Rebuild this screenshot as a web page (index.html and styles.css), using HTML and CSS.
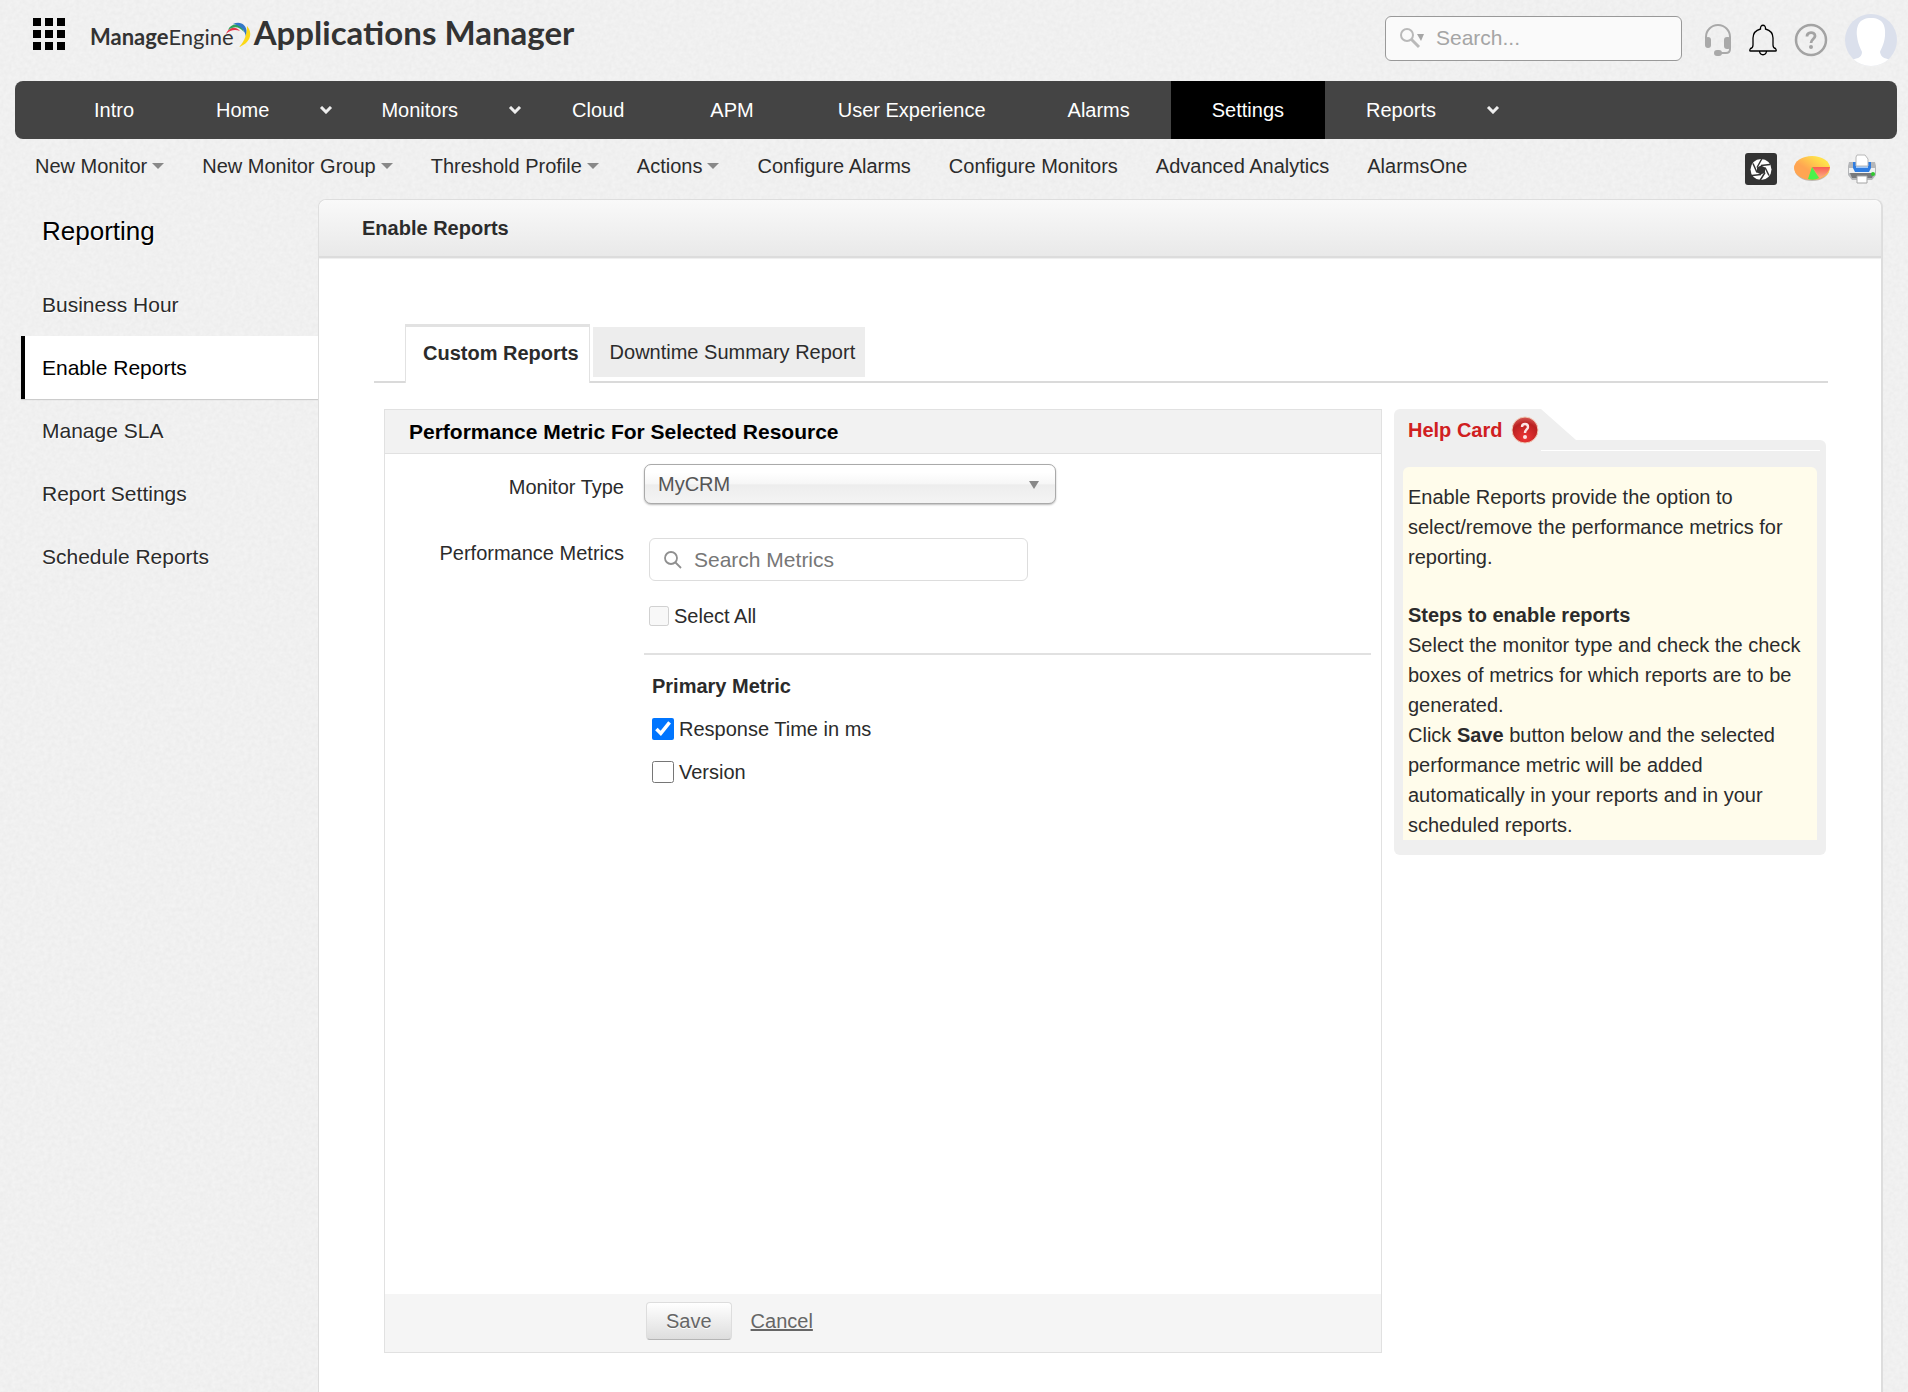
FILE: index.html
```html
<!DOCTYPE html>
<html lang="en">
<head>
    <meta charset="UTF-8">
    <meta name="viewport" content="width=device-width, initial-scale=1.0">
    <title>Applications Manager - Enable Reports</title>
    <link rel="stylesheet" href="styles.css">
</head>
<body>
    <header class="topbar">
        <button class="icon-btn" aria-label="All applications">
            <svg width="32" height="32" viewBox="0 0 32 32"><path d="M0 0h8v8H0zM12 0h8v8h-8zM24 0h8v8h-8zM0 12h8v8H0zM12 12h8v8h-8zM24 12h8v8h-8zM0 24h8v8H0zM12 24h8v8h-8zM24 24h8v8h-8z"/></svg>
        </button>
        <a class="logo" href="#">
            <span class="logo-brand"><b>Manage</b>Engine
                <svg class="logo-swoosh" width="26" height="26" viewBox="0 0 26 26">
                    <path d="M1 12C3 6 10 3 15 9C10 7 5 8 1 12Z" fill="#e8354b"/>
                    <path d="M3 8C6 1 16 0 19 10C14 4 9 4 3 8Z" fill="#2fa35a"/>
                    <path d="M8 2C17-2 24 5 21 15C20 8 15 3 8 2Z" fill="#3277c8"/>
                    <path d="M22 4C29 12 24 22 14 25C20 19 22 12 22 4Z" fill="#fbd817"/>
                </svg>
            </span>
            <span class="logo-product">Applications Manager</span>
        </a>
        <div class="topbar-tools">
            <div class="search">
                <svg width="26" height="22" viewBox="0 0 26 22" fill="none" stroke="#b9b9b9">
                    <circle cx="8" cy="8" r="6" stroke-width="2"/>
                    <path d="M12 12l8 8" stroke-width="3"/>
                    <path d="M18 7h7l-3 7z" fill="#a6a6a6" stroke="none"/>
                </svg>
                <input type="text" placeholder="Search..." aria-label="Search">
            </div>
            <button class="icon-btn" aria-label="Support">
                <svg width="28" height="32" viewBox="0 0 28 32" fill="none" stroke="#a9a9a9">
                    <path d="M2 16V13a12 12 0 0 1 24 0v12q0 4-4 4h-8" stroke-width="2"/>
                    <rect x="1" y="13" width="6" height="11" rx="3" fill="#a9a9a9" stroke="none"/>
                    <rect x="20" y="13" width="7" height="12" rx="3" fill="#a9a9a9" stroke="none"/>
                    <rect x="10" y="26" width="8" height="6" rx="3" fill="#a9a9a9" stroke="none"/>
                </svg>
            </button>
            <button class="icon-btn" aria-label="Notifications">
                <svg width="28" height="32" viewBox="0 0 28 32" fill="none" stroke="#000" stroke-width="1.3">
                    <path d="M11.500 5C11 0 17 0 16.500 5C22 6.500 24 10 24 14V21Q24 24 26.500 24.500Q28 27 26.500 27H1.500Q0 27 1.500 24.500Q4 24 4 21V14C4 10 6 6.500 11.500 5Z"/>
                    <path d="M10.500 27C11 32 17 32 17.500 27"/>
                </svg>
            </button>
            <button class="icon-btn" aria-label="Help">
                <svg width="34" height="34" viewBox="0 0 34 34" fill="none" stroke="#a3a3a3">
                    <circle cx="17" cy="17" r="15" stroke-width="2.500"/>
                    <path d="M13 13.500C13 8.500 21 8.500 21 13C21 16 17 16 17 20" stroke-width="2.800"/>
                    <circle cx="17" cy="24" r="2" fill="#a3a3a3" stroke="none"/>
                </svg>
            </button>
            <button class="icon-btn" aria-label="Profile">
                <svg width="52" height="52" viewBox="0 0 52 52">
                    <defs><clipPath id="avatar-clip"><circle cx="26" cy="26" r="26"/></clipPath></defs>
                    <g clip-path="url(#avatar-clip)">
                        <path fill="#dbe0ec" d="M0 0h52v52H0z"/>
                        <path fill="#fff" d="M26 4C38 4 41 12 40 22C39 31 36 35 35 38C36 44 41 45 48 46V52H4V46C11 45 17 44 17 38C16 35 13 31 12 22C11 12 14 4 26 4Z"/>
                    </g>
                </svg>
            </button>
        </div>
    </header>

    <nav class="mainnav">
        <a href="#">Intro</a>
        <a class="has-menu" href="#">Home <svg class="chevron" width="14" height="8" viewBox="0 0 14 8"><path d="M2 1l5 5 5-5"/></svg></a>
        <a class="has-menu" href="#">Monitors <svg class="chevron" width="14" height="8" viewBox="0 0 14 8"><path d="M2 1l5 5 5-5"/></svg></a>
        <a class="short" href="#">Cloud</a>
        <a class="short" href="#">APM</a>
        <a href="#">User Experience</a>
        <a href="#">Alarms</a>
        <a class="active" href="#">Settings</a>
        <a class="has-menu" href="#">Reports <svg class="chevron" width="14" height="8" viewBox="0 0 14 8"><path d="M2 1l5 5 5-5"/></svg></a>
    </nav>

    <div class="subnav">
        <a class="drop" href="#">New Monitor</a>
        <a class="drop" href="#">New Monitor Group</a>
        <a class="drop" href="#">Threshold Profile</a>
        <a class="drop" href="#">Actions</a>
        <a href="#">Configure Alarms</a>
        <a href="#">Configure Monitors</a>
        <a href="#">Advanced Analytics</a>
        <a href="#">AlarmsOne</a>
        <div class="subnav-icons">
            <button class="icon-btn" aria-label="Snapshot">
                <svg width="32" height="32" viewBox="0 0 32 32">
                    <rect width="32" height="32" rx="3" fill="#333"/>
                    <circle cx="16" cy="16.500" r="10.500" fill="#fff"/>
                    <path d="M16 12.500l4 2v5l-4 2-4-2v-5z" fill="#333"/>
                    <path d="M16 12.500l9-1M20 14.500l4 8M20 19.500l-5 8M16 21.500l-9 1M12 19.500l-4-9M12 14.500l5-9" stroke="#333" stroke-width="1.500"/>
                </svg>
            </button>
            <button class="icon-btn" aria-label="Charts">
                <svg width="36" height="26" viewBox="0 0 36 26">
                    <defs>
                        <linearGradient id="pie" x1="0" y1="1" x2="1" y2="0"><stop offset="0.400" stop-color="#ffa552"/><stop offset="0.800" stop-color="#ffe14a"/></linearGradient>
                        <linearGradient id="pie-red" x1="0" y1="0" x2="0" y2="1"><stop offset="0" stop-color="#f95c50"/><stop offset="1" stop-color="#fab184"/></linearGradient>
                    </defs>
                    <ellipse cx="18" cy="14" rx="17" ry="11" fill="#bdb9b2"/>
                    <ellipse cx="18" cy="12" rx="18" ry="12" fill="url(#pie)"/>
                    <path d="M18 11H36Q35 18 26 22Z" fill="url(#pie-red)"/>
                    <path d="M18 11L14 23Q20 25 25 22Z" fill="#4bf24b"/>
                </svg>
            </button>
            <button class="icon-btn" aria-label="Print">
                <svg width="30" height="30" viewBox="0 0 30 30">
                    <path d="M2 8h5v5h16V8h5l1 4v9l-4 5H5l-4-5v-9z" fill="#b4b6b9"/>
                    <path d="M2 14h26v5H2z" fill="#f0f1f2"/>
                    <path d="M3 19h24l-2 5H5z" fill="#77797c"/>
                    <path d="M6 8h18v6l-2 4H8l-2-4z" fill="#2f7de1"/>
                    <path d="M9 9h12v5H9z" fill="#9fc8fa"/>
                    <path d="M10 1h8l3 4v7H9V3z" fill="#fff" stroke="#b8b8b8"/>
                    <path d="M10 22h10v7H10z" fill="#fff" stroke="#a5a5a5"/>
                    <circle cx="26" cy="20" r="2" fill="#2fc92f"/>
                </svg>
            </button>
        </div>
    </div>

    <div class="page">
        <aside class="sidebar">
            <h2>Reporting</h2>
            <a href="#">Business Hour</a>
            <a class="active" href="#">Enable Reports</a>
            <a href="#">Manage SLA</a>
            <a href="#">Report Settings</a>
            <a href="#">Schedule Reports</a>
        </aside>

        <main class="content">
            <h1 class="content-title">Enable Reports</h1>
            <div class="content-body">
                <div class="tabs">
                    <button class="tab active">Custom Reports</button>
                    <button class="tab">Downtime Summary Report</button>
                </div>

                <div class="columns">
                    <form class="panel">
                        <h2 class="panel-title">Performance Metric For Selected Resource</h2>
                        <div class="panel-body">
                            <label class="field-label" for="monitorType">Monitor Type</label>
                            <div class="select-wrap">
                                <select id="monitorType">
                                    <option>MyCRM</option>
                                </select>
                                <svg class="select-arrow" width="10" height="8" viewBox="0 0 10 8"><path d="M0 0h10L5 8z" fill="#888"/></svg>
                            </div>

                            <label class="field-label metrics-label" for="metricSearch">Performance Metrics</label>
                            <div class="metrics">
                                <div class="metric-search">
                                    <svg width="18" height="18" viewBox="0 0 18 18" fill="none" stroke="#8f8f8f" stroke-width="1.800"><circle cx="7" cy="7" r="6"/><path d="M11.500 11.500l5.500 5.500"/></svg>
                                    <input type="text" id="metricSearch" placeholder="Search Metrics">
                                </div>
                                <label class="select-all"><input type="checkbox" disabled>Select All</label>
                                <div class="metric-group">
                                    <h3>Primary Metric</h3>
                                    <label><input type="checkbox" checked>Response Time in ms</label>
                                    <label><input type="checkbox">Version</label>
                                </div>
                            </div>
                        </div>
                        <div class="panel-footer">
                            <button type="button" class="save-btn">Save</button>
                            <a href="#">Cancel</a>
                        </div>
                    </form>

                    <aside class="help-card">
                        <div class="help-tab">
                            <h2>Help Card</h2>
                            <svg width="28" height="28" viewBox="0 0 28 28">
                                <defs><radialGradient id="help-red" cx="0.500" cy="0.800" r="0.800"><stop offset="0" stop-color="#ee3535"/><stop offset="0.700" stop-color="#ba2020"/><stop offset="1" stop-color="#d65a55"/></radialGradient></defs>
                                <circle cx="14" cy="14" r="13" fill="url(#help-red)" stroke="#f0c9b4"/>
                                <path d="M11 11C11 7 17 7 17 11C17 13.500 14 13.500 14 17" fill="none" stroke="#fbe3e3" stroke-width="2.400"/>
                                <circle cx="14" cy="21" r="2" fill="#fbe3e3"/>
                            </svg>
                        </div>
                        <div class="help-frame">
                            <div class="help-text">
                                <p>Enable Reports provide the option to select/remove the performance metrics for reporting.</p>
                                <h3>Steps to enable reports</h3>
                                <p>Select the monitor type and check the check boxes of metrics for which reports are to be generated.</p>
                                <p>Click <b>Save</b> button below and the selected performance metric will be added automatically in your reports and in your scheduled reports.</p>
                            </div>
                        </div>
                    </aside>
                </div>
            </div>
        </main>
    </div>
</body>
</html>
```

FILE: styles.css
```css
* {
    box-sizing: border-box;
}
body {
    display: flex;
    flex-direction: column;
    min-height: 100vh;
    margin: 0;
    font-family: "Liberation Sans", Arial, sans-serif;
    font-size: 20px;
    line-height: 24px;
    color: #2b2b2b;
    background-color: #f5f5f5;
    /* paper texture */
    background-image: url("data:image/svg+xml,%3Csvg xmlns='http://www.w3.org/2000/svg' width='200' height='200'%3E%3Cfilter id='n'%3E%3CfeTurbulence type='fractalNoise' baseFrequency='0.25' numOctaves='2' stitchTiles='stitch'/%3E%3CfeColorMatrix values='0 0 0 0 0 0 0 0 0 0 0 0 0 0 0 0.04 0 0 0 0'/%3E%3C/filter%3E%3Crect width='200' height='200' filter='url(%23n)'/%3E%3C/svg%3E");
}
h1, h2, h3, p {
    margin: 0;
}
a {
    color: inherit;
    text-decoration: none;
}
svg {
    display: block;
    flex-shrink: 0;
}
button, input, select {
    font-family: inherit;
    font-size: inherit;
    color: inherit;
}
.icon-btn {
    padding: 0;
    border: none;
    background: none;
    cursor: pointer;
}

/* Top bar */
.topbar {
    display: flex;
    align-items: center;
    height: 81px;
    padding: 0 11px 0 33px;
}
.topbar > .icon-btn {
    margin-bottom: 13px;
}
.logo {
    display: flex;
    align-items: baseline;
    gap: 20px;
    margin: 0 0 12px 25px;
    font-family: Lato, sans-serif;
    color: #333;
}
.logo-brand {
    position: relative;
    font-size: 22px;
}
.logo-swoosh {
    position: absolute;
    top: -3px;
    right: -17px;
}
.logo-product {
    font-size: 33px;
    font-weight: bold;
}
.topbar-tools {
    display: flex;
    align-items: center;
    gap: 17px;
    margin-left: auto;
    margin-bottom: 1px;
}
.search {
    display: flex;
    align-items: center;
    gap: 11px;
    width: 297px;
    height: 45px;
    margin: 0 5px 4px 0;
    padding: 0 13px;
    border: 1px solid #999;
    border-radius: 6px;
    background-color: #fafafa;
}
.search input {
    flex: 1;
    min-width: 0;
    padding: 0;
    border: none;
    outline: none;
    background: none;
    font-size: 21px;
}
.search input::placeholder {
    color: #a5a5a5;
}

/* Main navigation */
.mainnav {
    display: flex;
    height: 58px;
    margin: 0 11px 0 15px;
    padding-left: 38px;
    border-radius: 8px;
    background-color: #444;
    color: #fff;
}
.mainnav a {
    display: flex;
    align-items: center;
    padding: 0 41px;
}
.mainnav .short {
    padding: 0 43px;
}
.mainnav .has-menu {
    gap: 50px;
    padding-right: 7px;
}
.mainnav .active {
    background-color: #000;
}
.chevron {
    fill: none;
    stroke: #eee;
    stroke-width: 3;
}

/* Sub navigation */
.subnav {
    display: flex;
    align-items: center;
    gap: 38px;
    height: 60px;
    padding: 0 31px 0 35px;
}
.subnav > a {
    margin-bottom: 6px;
}
.drop {
    display: flex;
    align-items: center;
    gap: 5px;
}
.drop::after {
    content: "";
    border: 6px solid transparent;
    border-top-color: #888;
    border-bottom: none;
}
.subnav-icons {
    display: flex;
    align-items: center;
    gap: 17px;
    margin-left: auto;
}

/* Page */
.page {
    display: flex;
    flex: 1;
    padding-right: 25px;
}
.sidebar {
    width: 318px;
    padding: 17px 0 0 21px;
    font-size: 21px;
    text-shadow: 1px 1px 0 #fff;
}
.sidebar h2 {
    margin-bottom: 27px;
    padding-left: 21px;
    font-size: 26px;
    font-weight: normal;
    line-height: 30px;
    color: #000;
}
.sidebar a {
    display: flex;
    align-items: center;
    height: 63px;
    padding-left: 21px;
}
.sidebar .active {
    padding-left: 17px;
    border-left: 4px solid #000;
    background-color: #fff;
    box-shadow: 0 1px 1px #ccc;
    color: #000;
}
.content {
    flex: 1;
    min-width: 0;
    border: 1px solid #ddd;
    border-right-width: 2px;
    border-bottom: none;
    border-radius: 8px 8px 0 0;
    background-color: #fff;
}
.content-title {
    padding: 16px 43px;
    border-bottom: 2px solid #dcdcdc;
    border-radius: 8px 8px 0 0;
    background-image: linear-gradient(#f9f9f9, #e9e9e9);
    box-shadow: 0 1px 1px #eee;
    font-size: 20px;
    line-height: 24px;
}
.content-body {
    padding: 66px 53px 38px 55px;
}

/* Tabs */
.tabs {
    display: flex;
    align-items: flex-start;
    gap: 3px;
    padding-left: 31px;
    border-bottom: 2px solid #dadada;
}
.tab {
    height: 50px;
    margin-top: 3px;
    padding: 0 10px 0 17px;
    border: none;
    background-color: #ededed;
    cursor: pointer;
}
.tab.active {
    height: 59px;
    margin: 0 0 -2px;
    padding-bottom: 4px;
    border: 1px solid #e2e2e2;
    border-top-width: 3px;
    border-bottom: none;
    background-color: #fff;
    font-weight: bold;
}

/* Form panel */
.columns {
    display: flex;
    align-items: flex-start;
    gap: 12px;
    padding: 26px 2px 0 10px;
}
.panel {
    flex: 1;
    min-width: 0;
    border: 1px solid #e1e1e1;
}
.panel-title {
    padding: 10px 24px 9px;
    border-bottom: 1px solid #e1e1e1;
    background-color: #f2f2f2;
    font-size: 21px;
    line-height: 24px;
    color: #000;
}
.panel-body {
    display: grid;
    grid-template-columns: 239px 1fr;
    grid-template-rows: auto 1fr;
    column-gap: 20px;
    row-gap: 34px;
    min-height: 840px;
    padding: 10px 10px 0 0;
}
.field-label {
    padding-top: 11px;
    text-align: right;
}
.metrics-label {
    padding-top: 3px;
}
.select-wrap {
    position: relative;
    max-width: 412px;
}
.select-wrap select {
    display: block;
    width: 100%;
    height: 40px;
    padding: 0 30px 0 13px;
    border: 1px solid #aaa;
    border-radius: 7px;
    background-image: linear-gradient(#fff 20%, #f6f6f6 50%, #ededed 52%, #f4f4f4 100%);
    box-shadow: 0 1px 2px #bbb;
    appearance: none;
    color: #555;
}
.select-arrow {
    position: absolute;
    top: 17px;
    right: 17px;
    pointer-events: none;
}
.metric-search {
    display: flex;
    align-items: center;
    gap: 12px;
    max-width: 379px;
    height: 43px;
    margin-left: 5px;
    padding: 0 14px;
    border: 1px solid #ddd;
    border-radius: 6px;
}
.metric-search input {
    flex: 1;
    min-width: 0;
    padding: 0;
    border: none;
    outline: none;
    font-size: 21px;
}
.metric-search input::placeholder {
    color: #777;
}
.metrics label {
    display: flex;
    align-items: center;
}
.metrics input[type="checkbox"] {
    width: 22px;
    height: 22px;
    margin: 0 5px 0 0;
}
.metrics .select-all {
    padding: 23px 5px 25px;
}
.metrics .select-all input {
    width: 20px;
    height: 20px;
}
.metric-group {
    display: flex;
    flex-direction: column;
    gap: 19px;
    padding: 19px 8px;
    border-top: 2px solid #e1e1e1;
}
.metric-group h3 {
    font-size: 20px;
}
.panel-footer {
    display: flex;
    align-items: center;
    gap: 19px;
    height: 58px;
    padding: 0 0 4px 261px;
    background-color: #f5f5f5;
    color: #666;
}
.panel-footer a {
    text-decoration: underline;
}
.save-btn {
    height: 38px;
    padding: 0 19px;
    border: 1px solid #ddd;
    border-bottom-color: #b5b5b5;
    border-radius: 4px;
    background-image: linear-gradient(#fff, #ddd);
    text-shadow: 0 1px 0 #fff;
    cursor: pointer;
}

/* Help card */
.help-card {
    width: 432px;
}
.help-tab {
    display: flex;
    align-items: center;
    gap: 9px;
    width: 182px;
    height: 41px;
    padding: 0 14px;
    border-radius: 6px 0 0 0;
    background-color: #efefef;
    clip-path: polygon(0 0, 147px 0, 182px 31px, 182px 41px, 0 41px);
}
.help-tab h2 {
    font-size: 20px;
    color: #d0201f;
}
.help-frame {
    margin-top: -10px;
    padding: 27px 9px 15px;
    border-radius: 0 6px 6px 6px;
    background: #efefef linear-gradient(#fff, #fff) 147px 10px / 279px 1px no-repeat;
}
.help-text {
    padding: 15px 5px 0;
    border-radius: 6px 6px 0 0;
    background-color: #fffceb;
    line-height: 30px;
}
.help-text h3 {
    margin-top: 28px;
    font-size: 20px;
}
```
